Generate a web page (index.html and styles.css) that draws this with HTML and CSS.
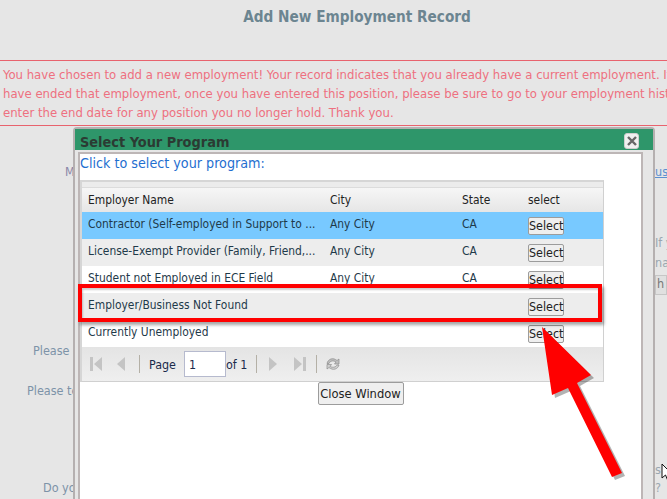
FILE: index.html
```html
<!DOCTYPE html>
<html lang="en">
<head>
<meta charset="utf-8">
<title>Add New Employment Record</title>
<link rel="stylesheet" href="styles.css">
</head>
<body>
<main class="page">
  <h1 class="page-title">Add New Employment Record</h1>
  <div class="alert">
    <p>You have chosen to add a new employment! Your record indicates that you already have a current employment. If you</p>
    <p>have ended that employment, once you have entered this position, please be sure to go to your employment history and</p>
    <p>enter the end date for any position you no longer hold. Thank you.</p>
  </div>
  <div class="form">
    <div class="form-row row-m"><span class="label label-m">My employer</span><a class="link">us</a></div>
    <div class="form-row row-if"><span class="spacer"></span><span class="side">If you</span></div>
    <div class="form-row row-na"><span class="spacer"></span><span class="side">name</span></div>
    <div class="form-row row-h"><span class="spacer"></span><span class="side-btn">h</span></div>
    <div class="form-row row-p1"><span class="label label-p1">Please enter</span></div>
    <div class="form-row row-p2"><span class="label label-p2">Please tell us</span></div>
    <div class="form-row row-s"><span class="spacer"></span><span class="side">s</span></div>
    <div class="form-row row-do"><span class="label label-do">Do you</span><span class="side">?</span></div>
  </div>
</main>

<section class="modal">
  <header class="modal-head">
    <h2>Select Your Program</h2>
    <button class="modal-x" aria-label="Close">
      <svg width="12" height="12" viewBox="0 0 12 12"><path d="M2 2l8 8M10 2l-8 8" stroke="#666" stroke-width="2.4" fill="none"/></svg>
    </button>
  </header>
  <div class="modal-body">
    <p class="prompt">Click to select your program:</p>
    <div class="grid">
      <div class="grid-cap"></div>
      <table>
        <colgroup><col class="c1"><col class="c2"><col class="c3"><col class="c4"></colgroup>
        <thead><tr><th>Employer Name</th><th>City</th><th>State</th><th>select</th></tr></thead>
        <tbody>
          <tr class="active"><td>Contractor (Self-employed in Support to ...</td><td>Any City</td><td>CA</td><td><button class="sel">Select</button></td></tr>
          <tr class="alt"><td>License-Exempt Provider (Family, Friend,...</td><td>Any City</td><td>CA</td><td><button class="sel">Select</button></td></tr>
          <tr><td>Student not Employed in ECE Field</td><td>Any City</td><td>CA</td><td><button class="sel">Select</button></td></tr>
          <tr class="alt"><td>Employer/Business Not Found</td><td></td><td></td><td><button class="sel">Select</button></td></tr>
          <tr><td>Currently Unemployed</td><td></td><td></td><td><button class="sel">Select</button></td></tr>
        </tbody>
      </table>
      <div class="pager">
        <svg class="pi pi-first" width="12" height="14" viewBox="0 0 12 14"><path d="M0 0h3v14H0zM12 0v14L4 7z" fill="#c4c4c4"/></svg>
        <svg class="pi pi-prev" width="8" height="14" viewBox="0 0 8 14"><path d="M8 0v14L0 7z" fill="#c4c4c4"/></svg>
        <span class="sep sep-1"></span>
        <span class="pg-word">Page</span>
        <input class="pg-input" value="1" aria-label="Page">
        <span class="pg-of">of 1</span>
        <span class="sep sep-2"></span>
        <svg class="pi pi-next" width="8" height="14" viewBox="0 0 8 14"><path d="M0 0v14l8-7z" fill="#c4c4c4"/></svg>
        <svg class="pi pi-last" width="12" height="14" viewBox="0 0 12 14"><path d="M0 0v14l8-7zM9 0h3v14H9z" fill="#c4c4c4"/></svg>
        <span class="sep sep-3"></span>
        <svg class="pi pi-refresh" width="16" height="16" viewBox="0 0 16 16"><path d="M2 7.500C3 3 8 1 12 4.500L14 3v5H9.500l1.500-2C8 4 5 5 4 7.500z" fill="#bdbdbd" stroke="#8c8c8c" stroke-width=".7"/><path d="M14 9C13 13 8 15 4 11.500L2 13V8.500h4.500L5 10.500C8 12 11 11 12 9z" fill="#cfcfcf" stroke="#8c8c8c" stroke-width=".7"/></svg>
      </div>
    </div>
    <div class="close-wrap"><button class="close-btn">Close Window</button></div>
  </div>
</section>

<div class="callout-box"></div>
<svg class="callout-arrow" width="667" height="499" viewBox="0 0 667 499" aria-hidden="true">
  <polygon class="arrow-shadow" points="545,330 594,378 580,386 625,476 615,480 571,391 555,398"/>
  <polygon class="arrow-fill" points="542,327 591,375 577,383 622,473 612,477 568,388 552,395"/>
</svg>
<svg class="cursor" width="12" height="19" viewBox="0 0 12 19" aria-hidden="true"><path d="M1 1v14l3.500-3 2.500 6 2.500-1-2.500-6H11z" fill="#fff" stroke="#111" stroke-width="1"/></svg>
</body>
</html>
```
FILE: styles.css
```css
* { box-sizing: border-box; }
html, body { margin: 0; height: 100%; }
body {
  width: 667px;
  height: 499px;
  overflow: hidden;
  position: relative;
  background: #e6e6e6;
  font-family: "DejaVu Sans Condensed", "DejaVu Sans", sans-serif;
  font-stretch: condensed;
}
.page-title {
  margin: 0;
  height: 60px;
  padding-top: 9px;
  padding-left: 47px;
  text-align: center;
  font-size: 15.200px;
  line-height: 17px;
  font-weight: bold;
  color: #6c8591;
}
.alert {
  height: 66px;
  padding: 4px 0 0 3px;
  border-top: 1px solid #e8636e;
  border-bottom: 1px solid #e8636e;
  color: #ee7080;
  font-size: 13px;
  line-height: 19px;
  white-space: nowrap;
  overflow: hidden;
}
.alert p { margin: 0; }
.form { color: #7d93a8; font-size: 12.500px; line-height: 15px; }
.form-row { display: flex; justify-content: space-between; white-space: nowrap; }
.spacer { flex: 1; }
.side, .link { width: 12px; flex: none; overflow: hidden; }
.form-row .side { width: 12px; color: #9aa6b0; }
.link { color: #5b8fd0; text-decoration: underline; }
.label { color: #7d93a8; }
.row-m { margin-top: 38px; padding-left: 65px; }
.label-m { color: #8a86a8; }
.row-if { margin-top: 56px; }
.row-na { margin-top: 5px; }
.row-h { margin-top: 5px; }
.side-btn { width: 12px; height: 20px; padding-left: 1px; border: 1px solid #c6c6c6; background: #e0e0e0; color: #777; }
.row-p1 { margin-top: 48px; padding-left: 33px; }
.row-p2 { margin-top: 25px; padding-left: 27px; }
.row-s { margin-top: 64px; }
.row-do { margin-top: 3px; padding-left: 43px; }

.modal {
  position: absolute;
  left: 73px;
  top: 127px;
  width: 582px;
  height: 372px;
  border: 2px solid #b5b0b0;
  border-bottom: 0;
  border-radius: 4px 4px 0 0;
  background: #e6e6e6;
}
.modal-head {
  height: 21px;
  background: #2e966a;
  display: flex;
  align-items: center;
  justify-content: space-between;
  padding: 0 14px 0 5px;
}
.modal-head h2 {
  margin: 0;
  font-size: 14.400px;
  line-height: 21px;
  padding-top: 5px;
  color: #2b3b33;
  font-weight: bold;
}
.modal-x {
  width: 15px;
  height: 16px;
  padding: 0;
  margin-top: 3px;
  border: 1px solid #cfcfcf;
  border-radius: 3px;
  background: #f0f0f0;
  display: flex;
  align-items: center;
  justify-content: center;
}
.modal-body {
  margin: 2px 0 0 3px;
  width: 565px;
  height: 360px;
  border: 1px solid #bdb6b6;
  border-width: 2px 2px 0;
  background: #fff;
}
.prompt {
  margin: 0;
  height: 26px;
  font-size: 14.200px;
  line-height: 19px;
  color: #1f6fd0;
}
.grid {
  width: 524px;
  border: 2px solid #d6d6d6;
  border-bottom: 1px solid #d0d0d0;
  border-right: 1px solid #d0d0d0;
}
.grid-cap { height: 6px; background: #ececec; border-bottom: 1px solid #dcdcdc; }
table { border-collapse: collapse; table-layout: fixed; width: 521px; font-size: 11.900px; }
.c1 { width: 242px; }
.c2 { width: 132px; }
.c3 { width: 66px; }
.c4 { width: 81px; }
th {
  height: 24px;
  padding: 0 6px;
  text-align: left;
  font-weight: normal;
  color: #222;
  background: linear-gradient(#f6f6f6, #e6e6e6);
}
td {
  height: 27px;
  padding: 0 6px 3px;
  color: #1f3a4a;
  white-space: nowrap;
  overflow: hidden;
  vertical-align: middle;
}
tr.active td { background: #78c9ff; }
tr.alt td { background: #ededed; }
td:last-child { overflow: visible; padding-top: 0; padding-bottom: 0; }
.sel {
  display: block;
  width: 36px;
  height: 18px;
  padding: 0;
  border: 1px solid #9c9c9c;
  border-radius: 2px;
  background: #efefef;
  font: 12.400px/16px "DejaVu Sans Condensed", "DejaVu Sans", sans-serif;
  color: #222;
}
.pager {
  height: 34px;
  display: flex;
  align-items: center;
  background: linear-gradient(#e4e4e4, #efefef);
  font-size: 12.400px;
  color: #1a2a4a;
  padding-left: 8px;
}
.pi { flex: none; }
.pi-prev { margin-left: 15px; }
.sep { width: 1px; height: 18px; background: #b4b0a6; flex: none; }
.sep-1 { margin-left: 14px; }
.pg-word { margin-left: 9px; width: 35px; }
.pg-input {
  width: 42px;
  height: 26px;
  padding: 0 0 0 4px;
  border: 1px solid #b6bace;
  background: #fff;
  font: 12.400px "DejaVu Sans Condensed", "DejaVu Sans", sans-serif;
  color: #1a2a4a;
}
.pg-of { margin-left: 0; width: 30px; }
.pi-next { margin-left: 12px; }
.pi-last { margin-left: 17px; }
.sep-3 { margin-left: 10px; }
.pi-refresh { margin-left: 8px; }
.close-wrap { display: flex; justify-content: center; }
.close-btn {
  width: 86px;
  height: 23px;
  padding: 0;
  border: 1px solid #9c9c9c;
  border-radius: 2px;
  background: #efefef;
  font: 12.800px "DejaVu Sans Condensed", "DejaVu Sans", sans-serif;
  color: #222;
}

.callout-box {
  position: absolute;
  left: 78px;
  top: 284px;
  width: 524px;
  height: 38px;
  border: 4px solid #ff0000;
  box-shadow: 2px 3px 3px rgba(0, 0, 0, .35), inset 1px 2px 2px rgba(0, 0, 0, .2);
}
.callout-arrow { position: absolute; left: 0; top: 0; pointer-events: none; }
.arrow-shadow { fill: rgba(0, 0, 0, .3); }
.arrow-fill { fill: #ff0000; }
.cursor { position: absolute; left: 661px; top: 463px; }
```
